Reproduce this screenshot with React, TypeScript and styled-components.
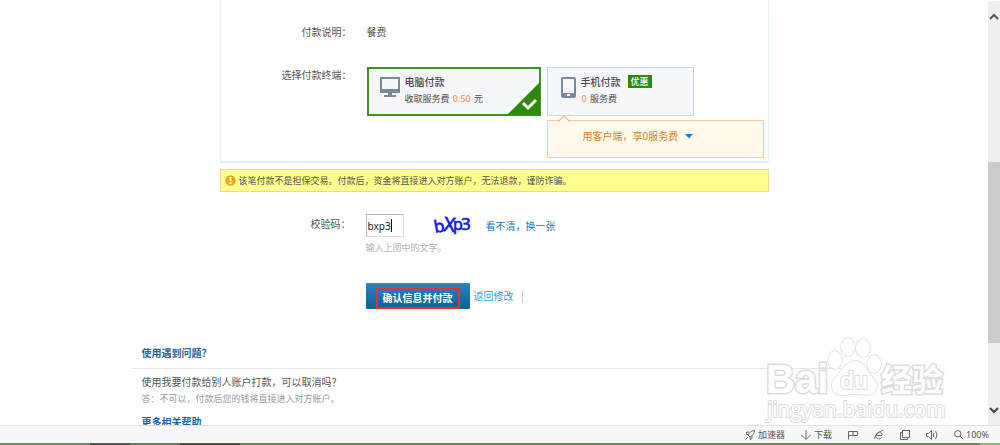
import React from "react";
import styled, { createGlobalStyle, css } from "styled-components";

const Global = createGlobalStyle`
  *, *::before, *::after { box-sizing: border-box; }
  body {
    margin: 0;
    background: #fff;
    color: #555;
    font: 10px/14px "Noto Sans", "Noto Sans CJK SC", sans-serif;
  }
`;

const Window = styled.div`
  display: flex;
  flex-direction: column;
  height: 100vh;
  padding-top: 1px;
`;

const Viewport = styled.div`
  position: relative;
  display: flex;
  flex: 1;
  min-height: 0;
`;

const Page = styled.main`
  flex: 1;
  overflow: hidden;
`;

const Column = styled.form`
  max-width: 549px;
  margin: 0 auto;
`;

const Panel = styled.section`
  border: solid #e3f1f7;
  border-width: 0 1px 2px 1px;
  padding: 24px 4px 3px 0;
`;

const Row = styled.div<{ $gap?: number }>`
  display: grid;
  grid-template-columns: 131px 1fr;
  column-gap: 15px;
  margin-top: ${(p) => p.$gap ?? 0}px;
`;

const Label = styled.span<{ $drop?: number }>`
  text-align: right;
  padding-top: ${(p) => p.$drop ?? 0}px;
`;

const Options = styled.div`
  display: flex;
  gap: 6px;
  align-items: flex-start;
`;

const PhoneGroup = styled.div`
  flex: 1;
  display: flex;
  flex-direction: column;
  gap: 4px;
`;

const Option = styled.label<{ $selected?: boolean }>`
  position: relative;
  display: flex;
  height: 49px;
  width: 147px;
  padding: 7px 0 0 13px;
  gap: 5px;
  background: #f5f7fb;
  border: 1px solid #ccd8e6;
  ${(p) =>
    p.$selected &&
    css`
      width: 174px;
      padding: 6px 0 0 11px;
      border: 2px solid #3f9420;
    `}
`;

const HiddenRadio = styled.input`
  position: absolute;
  opacity: 0;
  margin: 0;
  pointer-events: none;
`;

const OptionIcon = styled.svg`
  flex: none;
  margin-top: 1px;
`;

const OptionText = styled.div`
  display: flex;
  flex-direction: column;
  gap: 4px;
`;

const OptionTitle = styled.div`
  display: flex;
  gap: 7px;
  align-items: center;
  height: 13px;
  color: #4a4a4a;
  font-weight: 500;
`;

const Fee = styled.div`
  font-size: 9px;
  line-height: 13px;
  color: #4a4a4a;
`;

const Amount = styled.span`
  color: #ff7f45;
  margin: 0 1px;
`;

const Badge = styled.span`
  background: #2f8a0c;
  color: #fff;
  font-size: 9px;
  line-height: 13px;
  padding: 0 3px;
`;

const Corner = styled.svg`
  position: absolute;
  right: -1px;
  bottom: -1px;
`;

const Promo = styled.div`
  position: relative;
  display: flex;
  align-items: flex-start;
  gap: 7px;
  height: 38px;
  padding: 8px 0 0 35px;
  background: #fffaec;
  border: 1px solid #fbc998;
  color: #dd7d26;
`;

const PromoArrow = styled.svg`
  position: absolute;
  left: 10px;
  top: -6px;
`;

const Caret = styled.svg`
  margin-top: 5px;
`;

const Notice = styled.p`
  display: flex;
  align-items: center;
  gap: 3px;
  height: 23px;
  margin: 6px 0 0;
  padding: 0 4px;
  background: #ffff8e;
  border: 1px solid #efd695;
  color: #555;
  font-size: 9px;
`;

const CodeLine = styled.div`
  display: flex;
  align-items: center;
`;

const CodeField = styled.div`
  position: relative;
  display: flex;
`;

const TextCursor = styled.span`
  position: absolute;
  left: 25px;
  top: 5px;
  width: 1px;
  height: 13px;
  background: #111;
`;

const CodeInput = styled.input`
  width: 38px;
  height: 23px;
  padding: 1px 0 0 1px;
  border: 1px solid #d8dde2;
  border-top-color: #b5bcc4;
  border-left-color: #b5bcc4;
  color: #222;
  font: 10px "Noto Sans", "Noto Sans CJK SC", sans-serif;
  outline: 0;
`;

const Captcha = styled.svg`
  margin: 0 13px 0 29px;
  overflow: visible;
  fill: #1414f0;
  stroke: #1414f0;
  font-family: "Noto Sans", sans-serif;
`;

const Hint = styled.p`
  margin: 4px 0 0;
  font-size: 9px;
  color: #b2b2b2;
`;

const Link = styled.a<{ $bright?: boolean }>`
  color: ${(p) => (p.$bright ? "#2f9fd8" : "#2478a8")};
  text-decoration: none;
`;

const Actions = styled.div`
  display: flex;
  align-items: center;
  gap: 4px;
  grid-column: 2;
`;

const Submit = styled.button`
  height: 26px;
  width: 104px;
  padding: 1px 0 0;
  border: 0;
  border-radius: 1px;
  background: linear-gradient(#2a83c6, #0b6292);
  color: #fff;
  font: bold 10px/14px "Noto Sans", "Noto Sans CJK SC", sans-serif;
`;

const Mark = styled.span`
  display: block;
  height: 21px;
  margin: 3px 10px 0;
  border: 2px solid #ee2c34;
  line-height: 16px;
`;

const Divider = styled.span`
  width: 1px;
  height: 13px;
  margin-left: 4px;
  background: #ccc;
`;

const Help = styled.section`
  max-width: 725px;
  margin: 37px auto 0;
`;

const HelpTitle = styled.h2`
  margin: 0;
  padding: 0 10px 8px;
  border-bottom: 1px solid #e6e6e6;
  color: #2f5f92;
  font-size: 10px;
`;

const HelpBody = styled.div`
  padding: 6px 10px 0;
`;

const Question = styled.p`
  margin: 0;
`;

const Answer = styled.p`
  margin: 3px 0 9px;
  font-size: 9px;
  color: #999;
`;

const MoreLink = styled(Link)`
  color: #1565b0;
  font-weight: bold;
`;

const Scrollbar = styled.div`
  display: flex;
  flex-direction: column;
  align-items: center;
  width: 12px;
  padding: 12px 0 11px;
  background: #efefef;
`;

const Space = styled.span<{ $share: number }>`
  flex: ${(p) => p.$share};
`;

const Thumb = styled.span`
  flex: 180;
  width: 12px;
  background: #cbcbcb;
`;

const Watermark = styled.svg`
  position: absolute;
  right: 50px;
  bottom: 0;
  fill: #fff;
  stroke: #dcdcdc;
  stroke-width: 1.5;
  paint-order: stroke;
  pointer-events: none;
`;

const StatusBar = styled.footer`
  display: flex;
  align-items: center;
  justify-content: flex-end;
  gap: 16px;
  height: 18px;
  padding-right: 11px;
  background: #f8f8f8;
  border-top: 1px solid #e2e2e2;
  color: #555;
`;

const Tool = styled.button`
  display: flex;
  align-items: center;
  gap: 3px;
  padding: 0;
  border: 0;
  background: none;
  color: inherit;
  font: 9px/14px "Noto Sans", "Noto Sans CJK SC", sans-serif;
`;

const Desktop = styled.div`
  height: 2px;
  background: linear-gradient(90deg, #75866a 0 9%, #555b54 9% 13%, #6b7a5d 13% 18%, #4d5348 18% 24%, #6f8260 24% 60%, #74845f 60% 98%, #8fb56c 98%);
`;

const stroke = { fill: "none", stroke: "#666", strokeWidth: 1 } as const;

export default function App() {
  return (
    <Window>
      <Global />
      <Viewport>
        <Page>
          <Column onSubmit={(e) => e.preventDefault()}>
            <Panel>
              <Row>
                <Label>付款说明：</Label>
                <span>餐费</span>
              </Row>
              <Row $gap={28}>
                <Label $drop={1}>选择付款终端：</Label>
                <Options>
                  <Option $selected>
                    <HiddenRadio type="radio" name="terminal" defaultChecked />
                    <OptionIcon width="20" height="22" viewBox="0 0 20 22">
                      <path fill="#7b899d" fillRule="evenodd" d="M0 1h20v16H0zM2 3v10h16V3zM8 17h4v2h4v2H4v-2h4z" />
                    </OptionIcon>
                    <OptionText>
                      <OptionTitle>电脑付款</OptionTitle>
                      <Fee>
                        收取服务费 <Amount>0.50</Amount> 元
                      </Fee>
                    </OptionText>
                    <Corner width="33" height="33" viewBox="0 0 33 33">
                      <path fill="#2f8a0c" d="M33 0v33H0z" />
                      <path fill="none" stroke="#fff" strokeWidth="3" d="M16 21l5 5 8-8" />
                    </Corner>
                  </Option>
                  <PhoneGroup>
                    <Option>
                      <HiddenRadio type="radio" name="terminal" />
                      <OptionIcon width="15" height="22" viewBox="0 0 15 22">
                        <path fill="#7b899d" fillRule="evenodd" d="M2 1h11q2 0 2 2v17q0 2-2 2H2q-2 0-2-2V3q0-2 2-2zM2 3v14h11V3zM6 18v2h3v-2z" />
                      </OptionIcon>
                      <OptionText>
                        <OptionTitle>
                          手机付款<Badge>优惠</Badge>
                        </OptionTitle>
                        <Fee>
                          <Amount>0</Amount> 服务费
                        </Fee>
                      </OptionText>
                    </Option>
                    <Promo>
                      <PromoArrow width="12" height="7" viewBox="0 0 12 7">
                        <path fill="#fffaec" stroke="#f5904f" d="M0 6.500L6 .8l6 5.700" />
                      </PromoArrow>
                      用客户端，享0服务费
                      <Caret width="8" height="5" viewBox="0 0 8 5">
                        <path fill="#1487d4" d="M0 0h8L4 4.500z" />
                      </Caret>
                    </Promo>
                  </PhoneGroup>
                </Options>
              </Row>
            </Panel>
            <Notice>
              <svg width="11" height="11" viewBox="0 0 11 11">
                <circle cx="5.500" cy="5.500" r="5.300" fill="#f5a21c" />
                <path fill="#fff" d="M4.500 2h2v4h-2zM4.500 7h2v2h-2z" />
              </svg>
              该笔付款不是担保交易。付款后，资金将直接进入对方账户，无法退款，谨防诈骗。
            </Notice>
            <Row $gap={22}>
              <Label as="label" htmlFor="code" $drop={3}>
                校验码：
              </Label>
              <div>
                <CodeLine>
                  <CodeField>
                    <CodeInput id="code" defaultValue="bxp3" />
                    <TextCursor />
                  </CodeField>
                  <Captcha width="40" height="22" viewBox="0 0 40 22">
                    <text x="2" y="18" rotate="-10" fontSize="17" strokeWidth="0.6">b</text>
                    <text x="10" y="16" rotate="6" fontSize="20" strokeWidth="0.6">X</text>
                    <text x="20" y="15" fontSize="16" strokeWidth="0.6">p</text>
                    <text x="28" y="15" fontSize="17" strokeWidth="0.6">3</text>
                  </Captcha>
                  <Link href="#refresh">看不清，换一张</Link>
                </CodeLine>
                <Hint>输入上图中的文字。</Hint>
              </div>
            </Row>
            <Row $gap={28}>
              <Actions>
                <Submit type="submit">
                  <Mark>确认信息并付款</Mark>
                </Submit>
                <Link $bright href="#back">
                  返回修改
                </Link>
                <Divider />
              </Actions>
            </Row>
          </Column>
          <Help>
            <HelpTitle>使用遇到问题？</HelpTitle>
            <HelpBody>
              <Question>使用我要付款给别人账户打款，可以取消吗？</Question>
              <Answer>答：不可以，付款后您的钱将直接进入对方账户。</Answer>
              <MoreLink href="#help">更多相关帮助</MoreLink>
            </HelpBody>
          </Help>
        </Page>
        <Watermark width="190" height="95" viewBox="0 0 190 95">
          <text x="6" y="63" fontSize="40" fontWeight="bold" fontFamily="Liberation Sans" strokeWidth="3">
            Bai
          </text>
          <ellipse cx="75" cy="30" rx="7" ry="9" />
          <ellipse cx="88" cy="17" rx="7" ry="9" />
          <ellipse cx="103" cy="18" rx="7" ry="9" />
          <ellipse cx="114" cy="34" rx="7" ry="9" />
          <path d="M95 31C104 31 107 41 113 48C120 55 118 65 107 65C101 65 98 64 94 64C90 64 88 65 82 65C72 65 69 55 75 48C81 42 86 31 95 31Z" />
          <text x="80" y="59" fontSize="23" fontWeight="bold" fontFamily="Liberation Sans" strokeWidth="2">
            du
          </text>
          <text x="121" y="61" fontSize="31" fontWeight="bold" fontFamily="Noto Sans CJK SC" strokeWidth="3">
            经验
          </text>
          <text x="7" y="87" fontSize="21" fontFamily="Open Sans" strokeWidth="2">
            jingyan.baidu.com
          </text>
        </Watermark>
        <Scrollbar>
          <svg width="10" height="7" viewBox="0 0 10 7">
            <path d="M1 6l4-4 4 4" fill="none" stroke="#555" strokeWidth="2" />
          </svg>
          <Space $share={142} />
          <Thumb />
          <Space $share={64} />
          <svg width="10" height="7" viewBox="0 0 10 7">
            <path d="M1 1l4 4 4-4" fill="none" stroke="#444" strokeWidth="2" />
          </svg>
        </Scrollbar>
      </Viewport>
      <StatusBar>
        <Tool>
          <svg width="10" height="10" viewBox="0 0 10 10" {...stroke}>
            <path d="M9.500.5C6 .5 4 3 3 5l2 2c2-1 4.500-3 4.500-6.500zM4 2H1.500v2.500H3M7 6v2.500L5 9.500V7M.5 9.500L3 7" />
          </svg>
          加速器
        </Tool>
        <Tool>
          <svg width="10" height="10" viewBox="0 0 10 10" {...stroke}>
            <path d="M5 0v9M.5 5L5 9.500 9.500 5" />
          </svg>
          下载
        </Tool>
        <Tool aria-label="标记">
          <svg width="10" height="10" viewBox="0 0 10 10" {...stroke}>
            <path d="M.5 9.500v-8h9v4h-9M5 1.500v4" />
          </svg>
        </Tool>
        <Tool aria-label="浏览器">
          <svg width="10" height="10" viewBox="0 0 11 11" {...stroke}>
            <path d="M2 6h7c0-5-6-5-7 0-.5 4 5 5 6.500 2M1 10C-.5 7 8-1 10.500 1" />
          </svg>
        </Tool>
        <Tool aria-label="窗口">
          <svg width="10" height="10" viewBox="0 0 10 10" {...stroke}>
            <path d="M2.500.5h7v7h-7zM2.500 2.500h-2v7h7v-2" />
          </svg>
        </Tool>
        <Tool aria-label="声音">
          <svg width="12" height="10" viewBox="0 0 12 10" {...stroke}>
            <path d="M.5 3.500h2L5.500.5v9l-3-3h-2zM7.500 3v4M9.500 1q3 4 0 8" />
          </svg>
        </Tool>
        <Tool>
          <svg width="9" height="9" viewBox="0 0 9 9" {...stroke}>
            <circle cx="3.800" cy="3.800" r="3.200" />
            <path d="M6 6l2.800 2.800" />
          </svg>
          100%
        </Tool>
      </StatusBar>
      <Desktop />
    </Window>
  );
}
